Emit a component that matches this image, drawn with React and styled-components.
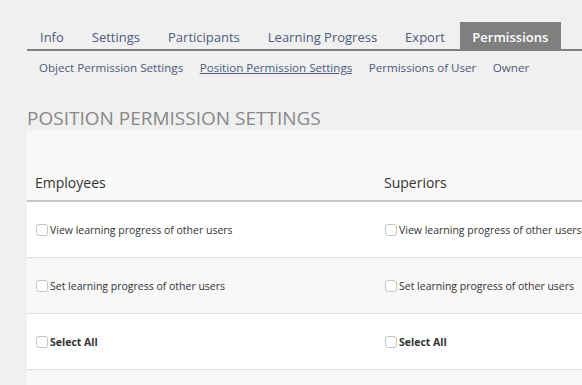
import React from 'react';
import styled, { createGlobalStyle } from 'styled-components';

const GlobalStyle = createGlobalStyle`
  html, body {
    margin: 0;
    padding: 0;
    background: #f0f0f0;
    font-family: "Open Sans", "Liberation Sans", sans-serif;
  }
`;

const tabs = ['Info', 'Settings', 'Participants', 'Learning Progress', 'Export', 'Permissions'];
const subTabs = ['Object Permission Settings', 'Position Permission Settings', 'Permissions of User', 'Owner'];
const columns = ['Employees', 'Superiors'];
const rows = [
  { label: 'View learning progress of other users' },
  { label: 'Set learning progress of other users' },
  { label: 'Select All', bold: true },
];

const App = () => {
  return (
    <>
      <GlobalStyle />
      <Page>
        <TabBar>
          {tabs.map(tab => (
            <Tab key={tab} active={tab === 'Permissions'}>{tab}</Tab>
          ))}
        </TabBar>
        <SubTabBar>
          {subTabs.map(sub => (
            <SubTab key={sub} active={sub === 'Position Permission Settings'}>{sub}</SubTab>
          ))}
        </SubTabBar>
        <Heading>Position Permission Settings</Heading>
        <Table>
          <TopBand />
          <HeaderRow>
            {columns.map(col => <HeaderCell key={col}>{col}</HeaderCell>)}
          </HeaderRow>
          {rows.map((row, i) => (
            <Row key={row.label} odd={i % 2 === 1}>
              {columns.map(col => (
                <Cell key={col}>
                  <Check />
                  <Label bold={row.bold}>{row.label}</Label>
                </Cell>
              ))}
            </Row>
          ))}
          <Row odd />
        </Table>
      </Page>
    </>
  );
};

export default App;

const Page = styled.div`
  padding: 22px 0 0 27px;
  overflow: hidden;
  height: 363px;
`
const TabBar = styled.div`
  display: flex;
  gap: 2px;
  border-bottom: 2px solid #808080;
`
const Tab = styled.div`
  height: 27px;
  line-height: 30px;
  padding: 0 ${props => props.active ? '12.5px' : '13px'};
  font-size: 13px;
  font-weight: ${props => props.active ? 600 : 400};
  color: ${props => props.active ? '#ffffff' : '#4d5b7c'};
  background: ${props => props.active ? '#7f7f7f' : 'transparent'};
  white-space: nowrap;
`
const SubTabBar = styled.div`
  display: flex;
  gap: 16.5px;
  padding: 8px 0 0 12px;
  height: 22px;
`
const SubTab = styled.span`
  font-size: 11.6px;
  line-height: 17px;
  color: #4d5b7c;
  text-decoration: ${props => props.active ? 'underline' : 'none'};
  white-space: nowrap;
`
const Heading = styled.h1`
  margin: 27px 0 0;
  font-size: 19px;
  font-weight: 400;
  line-height: 21px;
  padding-bottom: 1px;
  text-transform: uppercase;
  color: #888888;
  white-space: nowrap;
`
const Table = styled.div`
  width: 620px;
`
const TopBand = styled.div`
  height: 34px;
  background: #f7f7f7;
`
const HeaderRow = styled.div`
  display: grid;
  grid-template-columns: 349px 1fr;
  height: 36px;
  align-items: center;
  background: #f9f9f9;
  border-bottom: 2px solid #c8c8c8;
`
const HeaderCell = styled.div`
  padding-left: 8px;
  font-size: 14px;
  color: #333333;
`
const Row = styled.div`
  display: grid;
  grid-template-columns: 349px 1fr;
  height: 55px;
  align-items: center;
  background: ${props => props.odd ? '#f8f8f8' : '#ffffff'};
  border-bottom: 1px solid #dddddd;
`
const Cell = styled.label`
  display: flex;
  align-items: center;
  padding-left: 9px;
`
const Check = styled.span`
  width: 10px;
  height: 10px;
  border: 1px solid #c4c4c4;
  border-radius: 3px;
  background: #ffffff;
  margin-right: 2px;
  flex-shrink: 0;
`
const Label = styled.span`
  font-size: 10.5px;
  font-weight: ${props => props.bold ? 700 : 400};
  color: #333333;
  white-space: nowrap;
`
